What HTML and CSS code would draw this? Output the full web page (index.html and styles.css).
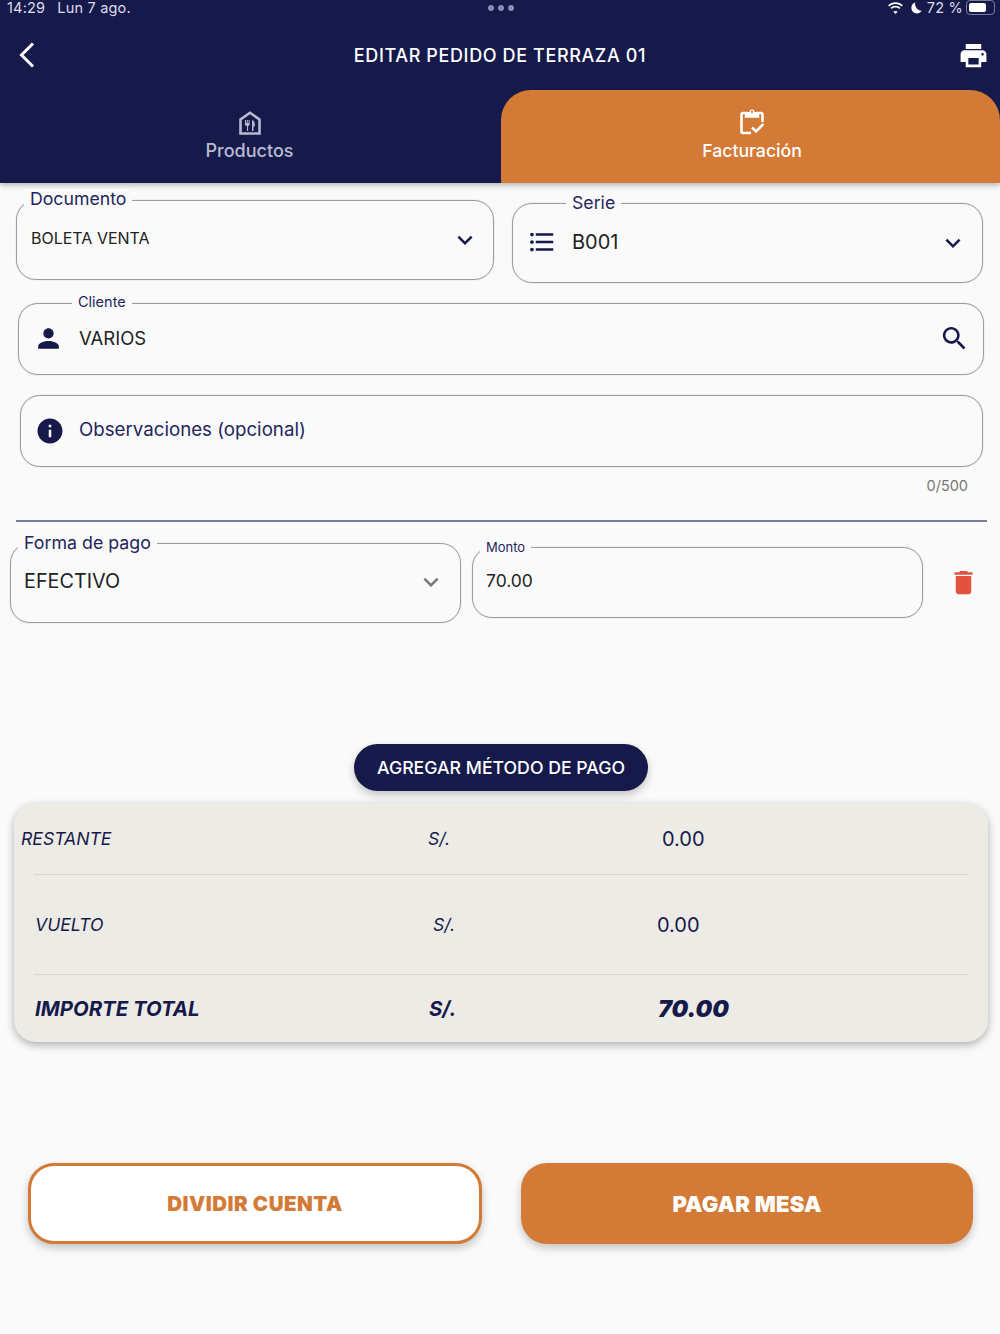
FILE: index.html
```html
<!DOCTYPE html>
<html lang="es">
<head>
    <meta charset="UTF-8">
    <meta name="viewport" content="width=device-width, initial-scale=1.0">
    <title>Editar pedido de Terraza 01</title>
    <link rel="stylesheet" href="styles.css">
</head>
<body>
    <header class="app-header">
        <div class="status-bar">
            <div class="status-time"><span>14:29</span><span>Lun 7 ago.</span></div>
            <div class="status-dots"><i></i><i></i><i></i></div>
            <div class="status-right">
                <svg class="icon-wifi" viewBox="0 0 18 13"><path d="M9 2.2c2.6 0 5 1 6.800 2.700l1.200-1.300C14.900 1.500 12.100.3 9 .3S3.100 1.500 1 3.600l1.200 1.300C4 3.200 6.400 2.200 9 2.200zM9 6c1.600 0 3 .6 4.100 1.600l1.300-1.300C13 4.900 11.100 4.100 9 4.100s-4 .8-5.400 2.200l1.300 1.300C6 6.600 7.400 6 9 6zM9 9.700c-.9 0-1.700.3-2.300.9L9 13l2.300-2.400c-.6-.6-1.400-.9-2.300-.9z"/></svg>
                <svg class="icon-moon" viewBox="0 0 12 13"><path d="M4.500.5C2 1.300.4 3.500.4 6.200c0 3.400 2.700 6.200 6.100 6.200 2.200 0 4.100-1.100 5.200-2.900-3.900.5-7.800-3.900-7.200-9z"/></svg>
                <span>72 %</span>
                <div class="battery"><div class="battery-level"></div></div>
            </div>
        </div>
        <div class="toolbar">
            <svg class="icon-back" viewBox="0 0 16 26"><path d="M14 1.500 2.500 13 14 24.500"/></svg>
            <h1 class="toolbar-title">EDITAR PEDIDO DE TERRAZA 01</h1>
            <svg class="icon-print" viewBox="0 0 24 24"><path d="M19 8H5c-1.660 0-3 1.340-3 3v6h4v4h12v-4h4v-6c0-1.660-1.340-3-3-3zm-3 11H8v-5h8v5zm3-7c-.55 0-1-.45-1-1s.45-1 1-1 1 .45 1 1-.45 1-1 1zm-1-9H6v4h12V3z"/></svg>
        </div>
        <div class="tabs">
            <div class="tab">
                <svg class="tab-icon" viewBox="0 0 22 24">
                    <path class="tab-stroke" d="M1.500 22.500V8.500L11 1.800l9.500 6.700v14z"/>
                    <path class="tab-fill" d="M6 9h1v3h.8V9h1v3h.8V9h1v4.500c0 .8-.6 1.300-1.500 1.400V20H8v-5.100c-1.100-.1-2-.6-2-1.400zM13 9c1.800.3 2.800 2 2.800 4.500v2h-1.300V20H13z"/>
                </svg>
                <span>Productos</span>
            </div>
            <div class="tab tab-active">
                <svg class="tab-icon" viewBox="0 0 24 26">
                    <path class="tab-stroke" d="M11 24H3a1.500 1.500 0 0 1-1.500-1.500V5.500A1.500 1.500 0 0 1 3 4h3v3.500h12V4h3a1.500 1.500 0 0 1 1.500 1.500V13"/>
                    <path class="tab-fill" d="M6 3h3.500a2.500 2.500 0 0 1 5 0H18v4.500H6zm6-1.200a1.100 1.100 0 1 0 0 2.200 1.100 1.100 0 0 0 0-2.200z"/>
                    <path class="tab-stroke" d="m12 18.500 4 4 7.500-7.500"/>
                </svg>
                <span>Facturación</span>
            </div>
        </div>
    </header>

    <main class="content">
        <div class="row-document">
            <div class="field field-document">
                <label class="field-label">Documento</label>
                <span class="field-value">BOLETA VENTA</span>
                <svg class="icon-chevron" viewBox="0 0 24 24"><path d="M7.410 8.590 12 13.170l4.590-4.580L18 10l-6 6-6-6 1.410-1.410z"/></svg>
            </div>
            <div class="field field-serie">
                <label class="field-label">Serie</label>
                <svg class="icon-list" viewBox="0 0 24 24"><path d="M4 10.500c-.83 0-1.500.67-1.500 1.500s.67 1.500 1.500 1.500 1.500-.67 1.500-1.500-.67-1.500-1.500-1.500zm0-6c-.83 0-1.500.67-1.500 1.500S3.170 7.500 4 7.500 5.500 6.830 5.500 6 4.830 4.500 4 4.500zm0 12c-.83 0-1.500.68-1.500 1.500s.68 1.500 1.500 1.500 1.500-.68 1.500-1.500-.67-1.500-1.500-1.500zM7 19h14v-2H7v2zm0-6h14v-2H7v2zm0-8v2h14V5H7z"/></svg>
                <span class="field-value">B001</span>
                <svg class="icon-chevron" viewBox="0 0 24 24"><path d="M7.410 8.590 12 13.170l4.590-4.580L18 10l-6 6-6-6 1.410-1.410z"/></svg>
            </div>
        </div>

        <div class="field field-client">
            <label class="field-label">Cliente</label>
            <svg class="icon-person" viewBox="0 0 24 24"><path d="M12 12c2.210 0 4-1.790 4-4s-1.790-4-4-4-4 1.790-4 4 1.790 4 4 4zm0 2c-2.670 0-8 1.340-8 4v2h16v-2c0-2.660-5.330-4-8-4z"/></svg>
            <span class="field-value">VARIOS</span>
            <svg class="icon-search" viewBox="0 0 24 24"><path d="M15.500 14h-.79l-.28-.27C15.410 12.590 16 11.110 16 9.500 16 5.910 13.090 3 9.500 3S3 5.910 3 9.500 5.910 16 9.500 16c1.610 0 3.090-.59 4.230-1.570l.27.28v.79l5 4.990L20.490 19l-4.990-5zm-6 0C7.010 14 5 11.990 5 9.500S7.010 5 9.500 5 14 7.010 14 9.500 11.990 14 9.500 14z"/></svg>
        </div>

        <div class="field field-notes">
            <svg class="icon-info" viewBox="0 0 24 24"><path d="M12 2C6.480 2 2 6.480 2 12s4.480 10 10 10 10-4.480 10-10S17.520 2 12 2zm1 15h-2v-6h2v6zm0-8h-2V7h2v2z"/></svg>
            <span class="field-placeholder">Observaciones (opcional)</span>
        </div>
        <div class="counter">0/500</div>
        <div class="divider"></div>

        <div class="row-payment">
            <div class="field field-method">
                <label class="field-label">Forma de pago</label>
                <span class="field-value">EFECTIVO</span>
                <svg class="icon-chevron" viewBox="0 0 24 24"><path d="M7.410 8.590 12 13.170l4.590-4.580L18 10l-6 6-6-6 1.410-1.410z"/></svg>
            </div>
            <div class="field field-amount">
                <label class="field-label">Monto</label>
                <span class="field-value">70.00</span>
            </div>
            <svg class="icon-trash" viewBox="0 0 24 24"><path d="M6 19c0 1.100.9 2 2 2h8c1.100 0 2-.9 2-2V7H6v12zM19 4h-3.500l-1-1h-5l-1 1H5v2h14V4z"/></svg>
        </div>

        <button class="add-method">AGREGAR MÉTODO DE PAGO</button>

        <section class="summary">
            <div class="summary-row row-remaining">
                <span>RESTANTE</span><span>S/.</span><span class="amount">0.00</span>
            </div>
            <div class="summary-row row-change">
                <span>VUELTO</span><span>S/.</span><span class="amount">0.00</span>
            </div>
            <div class="summary-row row-total">
                <span>IMPORTE TOTAL</span><span>S/.</span><span class="amount">70.00</span>
            </div>
        </section>

        <div class="actions">
            <button class="action action-split">DIVIDIR CUENTA</button>
            <button class="action action-pay">PAGAR MESA</button>
        </div>
    </main>
</body>
</html>
```

FILE: styles.css
```css
* {
    box-sizing: border-box;
}

body {
    margin: 0;
    height: 1334px;
    overflow: hidden;
    background: #fafafa;
    color: #222;
    font-family: Inter, "Liberation Sans", sans-serif;
}

svg {
    display: block;
    flex-shrink: 0;
}

/* header */
.app-header {
    height: 183px;
    background: #161a4b;
    box-shadow: 0 2px 6px rgba(0, 0, 0, 0.3);
    color: #fff;
}

.status-bar {
    height: 15px;
    display: flex;
    align-items: center;
    justify-content: space-between;
    padding: 0 5px 0 7px;
    font-size: 14.500px;
    letter-spacing: 0.2px;
    color: #dcdcea;
}

.status-time {
    width: 400px;
    display: flex;
    gap: 12px;
}

.status-dots {
    display: flex;
    gap: 4px;
}

.status-dots i {
    width: 6px;
    height: 6px;
    border-radius: 50%;
    background: #8b8bbb;
}

.status-right {
    width: 400px;
    display: flex;
    align-items: center;
    justify-content: flex-end;
    gap: 5px;
}

.icon-wifi {
    width: 17px;
    height: 12px;
    fill: #fff;
}

.icon-moon {
    width: 11px;
    height: 12px;
    fill: #fff;
    margin-left: 2px;
}

.battery {
    width: 29px;
    height: 15px;
    padding: 2px;
    border: 1px solid #777a9c;
    border-radius: 4px;
    margin-left: -2px;
}

.battery-level {
    width: 72%;
    height: 100%;
    background: #fff;
    border-radius: 2px;
}

.toolbar {
    height: 75px;
    display: flex;
    align-items: center;
    justify-content: space-between;
    padding: 5px 11px 0 19px;
}

.icon-back {
    width: 16px;
    height: 26px;
    fill: none;
    stroke: #fff;
    stroke-width: 3;
}

.toolbar-title {
    margin: 0;
    font-size: 18px;
    font-weight: 500;
    letter-spacing: 0.62px;
    margin-left: 7px;
}

.icon-print {
    width: 31px;
    height: 31px;
    fill: #fff;
}

.tabs {
    display: flex;
    height: 93px;
}

.tab {
    width: 501px;
    display: flex;
    flex-direction: column;
    align-items: center;
    padding: 21px 2px 0 0;
    gap: 5px;
    font-size: 18px;
    font-weight: 500;
    color: #b9bad0;
}

.tab-active {
    width: 499px;
    padding: 19px 0 0 3px;
    background: #d37a36;
    border-radius: 30px 30px 0 0;
    color: #fff;
    font-size: 17.700px;
}

.tab-icon {
    width: 22px;
    height: 24px;
}

.tab-active .tab-icon {
    width: 24px;
    height: 26px;
}

.tab-stroke {
    fill: none;
    stroke: currentColor;
    stroke-width: 2.6;
}

.tab-fill {
    fill: currentColor;
}

/* form */
.content {
    padding-top: 17px;
}

.field {
    position: relative;
    display: flex;
    align-items: center;
    border: 1px solid #9c9c9c;
    border-radius: 20px;
    box-shadow: 0 0 1px rgba(0, 0, 0, 0.35);
}

.field-label {
    position: absolute;
    top: -12px;
    padding: 0 6px;
    background: #fafafa;
    color: #23265c;
    font-size: 17.700px;
    line-height: 20px;
}

.field-value {
    flex: 1;
    font-size: 19px;
}

.field-placeholder {
    color: #23265c;
    font-size: 18.700px;
}

.icon-chevron {
    width: 30px;
    height: 30px;
    margin-top: 2px;
    fill: #161a4b;
}

.row-document {
    display: flex;
    align-items: flex-start;
    gap: 18px;
    padding-left: 16px;
}

.field-document {
    width: 478px;
    height: 80px;
    padding: 0 13px 2px 14px;
}

.field-document .field-label {
    left: 7px;
}

.field-document .field-value {
    font-size: 16px;
    margin-top: -3px;
}

.field-serie {
    width: 471px;
    height: 80px;
    margin-top: 3px;
    padding: 0 14px 2px 14px;
}

.field-serie .field-label {
    left: 53px;
    top: -11px;
}

.field-serie .field-value {
    margin-left: 15px;
    font-size: 20px;
}

.icon-list {
    width: 30px;
    height: 30px;
    fill: #161a4b;
}

.field-client {
    width: 966px;
    height: 72px;
    margin: 20px 0 0 18px;
    padding: 0 13px 2px 14px;
}

.field-client .field-label {
    left: 53px;
    font-size: 14.500px;
    top: -12px;
}

.field-client .field-value {
    margin-left: 15px;
    font-size: 18.500px;
}

.icon-person,
.icon-search {
    width: 31px;
    height: 31px;
    fill: #161a4b;
}

.field-notes {
    width: 963px;
    height: 72px;
    margin: 19.500px 0 0 20px;
    padding: 0 14px 2px 14px;
    gap: 14px;
}

.icon-info {
    width: 30px;
    height: 30px;
    margin-top: 2px;
    fill: #161a4b;
}

.counter {
    margin-top: 10px;
    padding-right: 32px;
    text-align: right;
    font-size: 14.500px;
    line-height: 18px;
    color: #777;
}

.divider {
    height: 2px;
    width: 971px;
    margin: 25px 0 0 16px;
    background: #7a7c9e;
}

.row-payment {
    display: flex;
    align-items: flex-start;
    margin-top: 21.500px;
    padding-left: 10px;
}

.field-method {
    width: 451px;
    height: 80px;
    padding: 0 14px 5px 13px;
}

.field-method .field-label {
    left: 7px;
    top: -11px;
    font-size: 17.800px;
}

.field-method .field-value {
    font-size: 19.800px;
}

.field-method .icon-chevron {
    fill: #777;
}

.field-amount {
    width: 451px;
    height: 71px;
    margin: 4px 0 0 11px;
    padding: 0 13px 5px 13px;
}

.field-amount .field-label {
    left: 7px;
    top: -11px;
    font-size: 13px;
}

.field-amount .field-value {
    font-size: 17.500px;
}

.icon-trash {
    width: 31px;
    height: 31px;
    margin: 24px 0 0 25px;
    fill: #e2533f;
}

.add-method {
    display: block;
    width: 294px;
    height: 47px;
    margin: 121px 0 0 354px;
    padding: 0;
    border: none;
    border-radius: 24px;
    background: #161a4b;
    box-shadow: 0 4px 8px rgba(0, 0, 0, 0.22);
    color: #fff;
    font-family: inherit;
    font-size: 17.700px;
    font-weight: 500;
}

/* totals */
.summary {
    width: 974px;
    height: 239px;
    margin: 12px 0 0 14px;
    background: #edebe6;
    border-radius: 22px;
    box-shadow: 0 3px 8px rgba(0, 0, 0, 0.3);
    color: #161a4b;
    font-size: 17.600px;
    font-style: italic;
    font-weight: 450;
}

.summary-row {
    display: grid;
    align-items: center;
}

.summary-row .amount {
    font-style: normal;
    font-size: 20px;
    font-weight: 400;
}

.row-remaining {
    height: 71px;
    padding-left: 7px;
    grid-template-columns: 407px 234px auto;
}

.row-change {
    height: 101px;
    padding-left: 21px;
    grid-template-columns: 398px 224px auto;
    background: linear-gradient(#d8d6d0, #d8d6d0) 20px 0 / 934px 1px no-repeat,
        linear-gradient(#d8d6d0, #d8d6d0) 20px 100% / 934px 1px no-repeat;
}

.row-total {
    height: 67px;
    padding-left: 21px;
    grid-template-columns: 394px 229px auto;
    font-size: 20.400px;
    font-weight: 700;
}

.row-total .amount {
    font-style: italic;
    font-size: 23.500px;
    font-weight: 900;
}

/* bottom buttons */
.actions {
    display: flex;
    gap: 39px;
    margin: 121px 0 0 28px;
}

.action {
    height: 81px;
    padding: 0;
    border-radius: 26px;
    box-shadow: 0 4px 8px rgba(0, 0, 0, 0.22);
    font-family: inherit;
    font-weight: 900;
}

.action-split {
    width: 454px;
    border: 3px solid #d37a36;
    background: #fff;
    color: #d37a36;
    font-size: 20.500px;
    letter-spacing: 0.5px;
}

.action-pay {
    width: 452px;
    border: none;
    background: #d37a36;
    color: #fff;
    font-size: 22px;
    letter-spacing: 0.2px;
}
```
